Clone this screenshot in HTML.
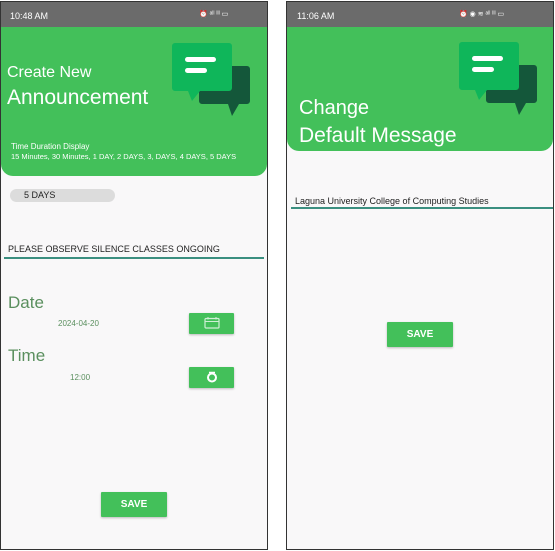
<!DOCTYPE html>
<html><head><style>
*{margin:0;padding:0;box-sizing:border-box}
body{width:555px;height:551px;background:#fff;position:relative;overflow:hidden;font-family:"Liberation Sans",Arial,sans-serif}
.ph{position:absolute;top:1px;height:549px;background:#f9f8f9;border:1.5px solid #333;overflow:hidden}
.sb{position:absolute;left:0;top:0;right:0;height:26px;background:#6b6b6b;color:#fff;font-size:9px}
.hd{position:absolute;left:0;right:0;top:25px;background:#43c05a;border-radius:0 0 12px 12px}
.a{position:absolute;white-space:nowrap}
.btn{position:absolute;background:#43c05a;color:#fff;font-weight:bold;font-size:10px;text-align:center;box-shadow:0 1px 2px rgba(0,0,0,.25);border-radius:1px}
</style></head><body>
<div class="ph" style="left:0;width:268px">
 <div class="sb"><span class="a" style="left:9px;top:9px">10:48 AM</span><span class="a" style="left:198px;top:8px;font-size:7px">⏰ ᵃˡˡ ˡˡˡ ▭</span></div>
 <div class="hd" style="height:149px">
  <svg class="a" style="left:169px;top:9px" width="90" height="85" viewBox="0 0 90 85">
   <path d="M29 30h48a3 3 0 0 1 3 3v32a3 3 0 0 1-3 3h-8l-7 12-4-12H32a3 3 0 0 1-3-3z" fill="#14573a"/>
   <path d="M5 7h54a3 3 0 0 1 3 3v42a3 3 0 0 1-3 3H30l-8 10-4-10H5a3 3 0 0 1-3-3V10a3 3 0 0 1 3-3z" fill="#0fb65a"/>
   <rect x="15" y="21" width="31" height="5" rx="2.5" fill="#fff"/>
   <rect x="15" y="32" width="22" height="5" rx="2.5" fill="#fff"/>
  </svg>
  <div class="a" style="left:6px;top:37px;color:#fff;font-size:16px">Create New</div>
  <div class="a" style="left:6px;top:59px;color:#fff;font-size:21px">Announcement</div>
  <div class="a" style="left:10px;top:115px;color:#fff;font-size:8px">Time Duration Display</div>
  <div class="a" style="left:10px;top:125px;color:#fff;font-size:7.5px">15 Minutes, 30 Minutes, 1 DAY, 2 DAYS, 3, DAYS, 4 DAYS, 5 DAYS</div>
 </div>
 <div class="a" style="left:9px;top:187px;width:105px;height:13px;background:#dcdcdc;border-radius:7px"></div>
 <div class="a" style="left:23px;top:188px;font-size:9px;color:#222">5 DAYS</div>
 <div class="a" style="left:7px;top:242px;font-size:9px;color:#222">PLEASE OBSERVE SILENCE CLASSES ONGOING</div>
 <div class="a" style="left:3px;top:255px;width:260px;height:2px;background:#3b8f80"></div>
 <div class="a" style="left:7px;top:291px;font-size:17px;color:#5a8f5e">Date</div>
 <div class="a" style="left:57px;top:317px;font-size:8px;color:#5a8f5e">2024-04-20</div>
 <div class="btn" style="left:188px;top:311px;width:45px;height:21px"><svg width="16" height="12" viewBox="0 0 16 12" style="margin-top:4px"><rect x="1" y="1.5" width="14" height="9.5" rx="1" fill="none" stroke="#cfeed5" stroke-width="1.2"/><line x1="1" y1="4.5" x2="15" y2="4.5" stroke="#cfeed5"/><line x1="4" y1="0" x2="4" y2="2.5" stroke="#cfeed5"/><line x1="12" y1="0" x2="12" y2="2.5" stroke="#cfeed5"/></svg></div>
 <div class="a" style="left:7px;top:344px;font-size:17px;color:#5a8f5e">Time</div>
 <div class="a" style="left:69px;top:371px;font-size:8px;color:#5a8f5e">12:00</div>
 <div class="btn" style="left:188px;top:365px;width:45px;height:21px"><svg width="12" height="12" viewBox="0 0 12 12" style="margin-top:4px"><circle cx="6" cy="6.5" r="4" fill="none" stroke="#fff" stroke-width="2"/><line x1="3" y1="1.5" x2="9" y2="1.5" stroke="#fff" stroke-width="1.5"/></svg></div>
 <div class="btn" style="left:100px;top:490px;width:66px;height:25px;line-height:25px">SAVE</div>
</div>
<div class="ph" style="left:286px;width:268px">
 <div class="sb"><span class="a" style="left:10px;top:9px">11:06 AM</span><span class="a" style="left:172px;top:8px;font-size:7px">⏰ ◉ ≋ ᵃˡˡ ˡˡˡ ▭</span></div>
 <div class="hd" style="height:124px">
  <svg class="a" style="left:170px;top:8px" width="90" height="85" viewBox="0 0 90 85">
   <path d="M29 30h48a3 3 0 0 1 3 3v32a3 3 0 0 1-3 3h-8l-7 12-4-12H32a3 3 0 0 1-3-3z" fill="#14573a"/>
   <path d="M5 7h54a3 3 0 0 1 3 3v42a3 3 0 0 1-3 3H30l-8 10-4-10H5a3 3 0 0 1-3-3V10a3 3 0 0 1 3-3z" fill="#0fb65a"/>
   <rect x="15" y="21" width="31" height="5" rx="2.5" fill="#fff"/>
   <rect x="15" y="32" width="22" height="5" rx="2.5" fill="#fff"/>
  </svg>
  <div class="a" style="left:12px;top:70px;color:#fff;font-size:20px">Change</div>
  <div class="a" style="left:12px;top:97px;color:#fff;font-size:21px">Default Message</div>
 </div>
 <div class="a" style="left:8px;top:194px;font-size:9px;color:#222">Laguna University College of Computing Studies</div>
 <div class="a" style="left:4px;top:205px;width:262px;height:2px;background:#3b8f80"></div>
 <div class="btn" style="left:100px;top:320px;width:66px;height:25px;line-height:25px">SAVE</div>
</div>
</body></html>
